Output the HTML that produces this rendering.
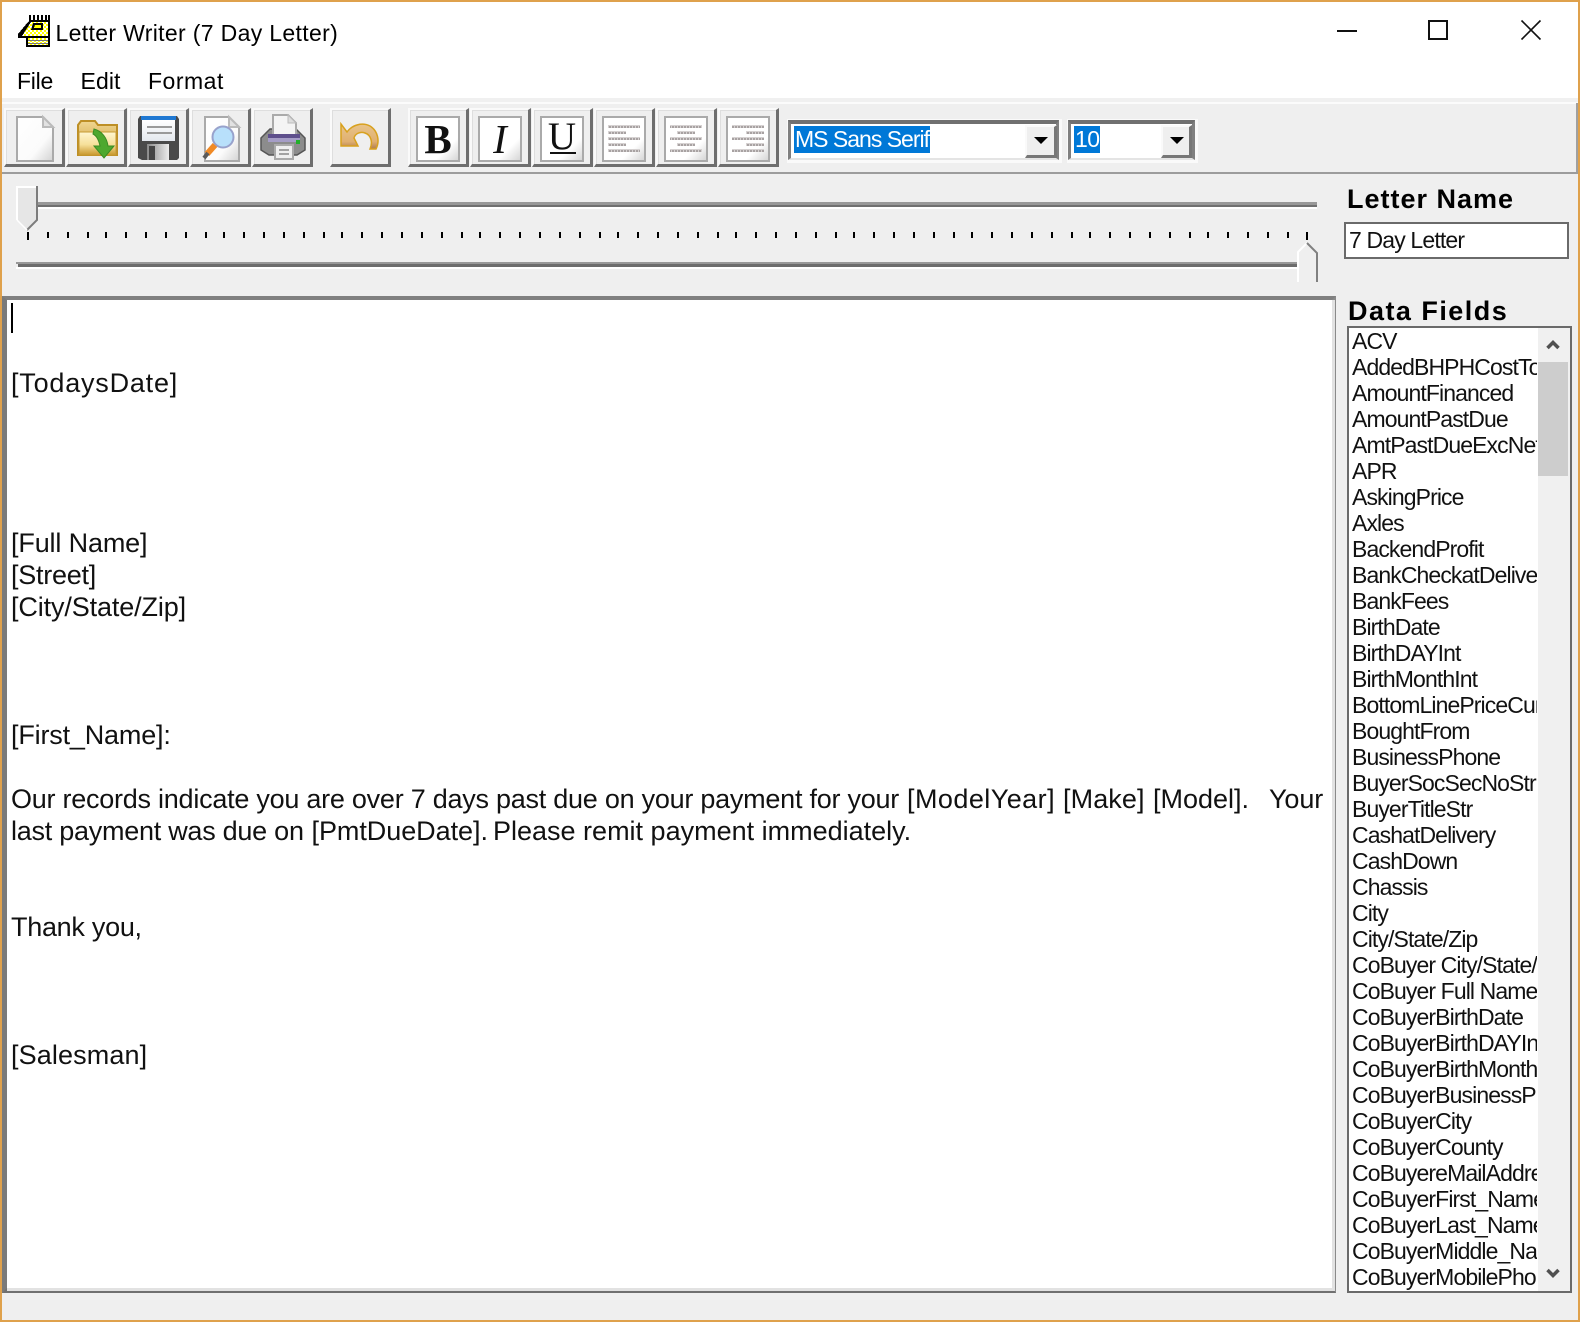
<!DOCTYPE html>
<html lang="en"><head><meta charset="utf-8"><title>Letter Writer</title>
<style>
html,body{margin:0;padding:0;background:#fff}
#w{position:relative;width:1580px;height:1322px;overflow:hidden;background:#efefef;font-family:"Liberation Sans",sans-serif;color:#000}
.a,.t{position:absolute}
.t{white-space:pre;line-height:1}
.btn{position:absolute;top:108px;height:59px;box-sizing:border-box;background:#efefef;border-style:solid;border-width:2px 3px 3px 2px;border-color:#fafafa #6e6e6e #6e6e6e #fafafa;box-shadow:inset 1px 1px 0 #dedede}
.fb{position:absolute;top:116px;width:44px;height:46px;box-sizing:border-box;border:2px solid #aaa;background:linear-gradient(135deg,#fff 0,#fff 72%,#d6d6d6 100%)}
.g{font-family:"Liberation Serif",serif;color:#111;text-align:center;position:absolute;left:0;width:40px;line-height:42px;top:0}
.e{position:absolute;left:11px;white-space:pre;font-size:27px;line-height:32px;height:32px;color:#111}
#list{position:absolute;left:1349px;top:328px;width:188px;height:963px;overflow:hidden;background:#fff}
#list div{height:26px;line-height:26px;font-size:23px;white-space:pre;padding-left:3px;letter-spacing:-.9px;color:#111}
.cb{position:absolute;top:120px;height:40px;box-sizing:border-box;background:#fff;border:solid;border-width:4px 3px 2px 3px;border-color:#707070 #808080 #e4e4e4 #808080;box-shadow:1px 1px 0 2px #fafafa}
.dd{position:absolute;top:125px;height:33px;box-sizing:border-box;background:#efefef;border:solid;border-width:2px 3px 3px 2px;border-color:#fafafa #777 #777 #fafafa}
.ar{position:absolute;top:137px;width:0;height:0;border-left:7px solid transparent;border-right:7px solid transparent;border-top:7px solid #000}
.sel{position:absolute;top:126px;height:27px;background:#0078d7;color:#fff;font-size:23px;line-height:27px;white-space:pre;overflow:hidden}
</style></head><body><div id="w">

<!-- title + menu white area -->
<div class="a" style="left:0;top:0;width:1580px;height:98px;background:#fff"></div>
<div class="a" style="left:0;top:98px;width:1580px;height:4px;background:#f0f0f0"></div>
<div class="a" style="left:0;top:102px;width:1580px;height:2px;background:#fbfbfb"></div>
<div class="a" style="left:1576px;top:103px;width:2px;height:70px;background:#a0a0a0"></div>
<div class="a" style="left:0;top:172px;width:1578px;height:2px;background:#9c9c9c"></div>

<div class="t" style="left:55.500px;top:21px;font-size:23px;line-height:24px;letter-spacing:.34px">Letter Writer (7 Day Letter)</div>
<div class="t" style="left:17px;top:69px;font-size:23px;line-height:24px;letter-spacing:-.25px">File</div>
<div class="t" style="left:80.500px;top:69px;font-size:23px;line-height:24px;letter-spacing:.1px">Edit</div>
<div class="t" style="left:148px;top:69px;font-size:23px;line-height:24px;letter-spacing:.5px">Format</div>

<!-- toolbar buttons -->
<div class="btn" style="left:4px;width:61px"></div>
<div class="btn" style="left:66px;width:61px"></div>
<div class="btn" style="left:128px;width:61px"></div>
<div class="btn" style="left:190px;width:61px"></div>
<div class="btn" style="left:252px;width:61px"></div>
<div class="btn" style="left:330px;width:61px"></div>
<div class="btn" style="left:408px;width:61px"></div>
<div class="btn" style="left:470px;width:61px"></div>
<div class="btn" style="left:532px;width:61px"></div>
<div class="btn" style="left:594px;width:61px"></div>
<div class="btn" style="left:656px;width:61px"></div>
<div class="btn" style="left:718px;width:61px"></div>

<div class="fb" style="left:416px"><span class="g" style="font-size:41px;font-weight:bold">B</span></div>
<div class="fb" style="left:478px"><span class="g" style="font-size:41px;font-style:italic">I</span></div>
<div class="fb" style="left:540px"><span class="g" style="font-size:39px;line-height:38px">U</span><div class="a" style="left:8px;top:34px;width:26px;height:2px;background:#111"></div></div>
<div class="fb" style="left:602px"></div>
<div class="fb" style="left:664px"></div>
<div class="fb" style="left:726px"></div>

<svg class="a" style="left:0;top:0" width="1580" height="300" viewBox="0 0 1580 300">
<defs>
<linearGradient id="pg" x1="0" y1="0" x2="1" y2="1"><stop offset="0" stop-color="#fff"/><stop offset=".65" stop-color="#fbfbfb"/><stop offset="1" stop-color="#d2d2d2"/></linearGradient>
<linearGradient id="fo" x1="0" y1="0" x2="0" y2="1"><stop offset="0" stop-color="#fff6d0"/><stop offset=".55" stop-color="#f6e09a"/><stop offset="1" stop-color="#c9982e"/></linearGradient>
<linearGradient id="fb2" x1="0" y1="0" x2="0" y2="1"><stop offset="0" stop-color="#f0d692"/><stop offset="1" stop-color="#c89a30"/></linearGradient>
<linearGradient id="un" x1="0" y1="0" x2="0" y2="1"><stop offset="0" stop-color="#e9c48a"/><stop offset=".7" stop-color="#e0b070"/><stop offset="1" stop-color="#b07c50"/></linearGradient>
<linearGradient id="fl" x1="0" y1="0" x2="0" y2="1"><stop offset="0" stop-color="#fff"/><stop offset="1" stop-color="#e4e8ee"/></linearGradient>
<linearGradient id="sh" x1="0" y1="0" x2="1" y2="0"><stop offset="0" stop-color="#8a8a8a"/><stop offset="1" stop-color="#ececec"/></linearGradient>
<pattern id="dy" width="4" height="4" patternUnits="userSpaceOnUse"><rect width="4" height="4" fill="#ffff00"/><rect width="2" height="2" fill="#fff"/><rect x="2" y="2" width="2" height="2" fill="#fff"/></pattern>
<pattern id="dl" width="3" height="3" patternUnits="userSpaceOnUse"><rect width="3" height="3" fill="#d6d2d2"/><rect width="2" height="2" fill="#a8a2a2"/></pattern>
</defs>

<!-- app icon -->
<g shape-rendering="crispEdges">
<path d="M30 20H50V47H26V38H18V34L28 22Z" fill="#000"/>
<path d="M31 22H48V36H22Z" fill="url(#dy)"/>
<path d="M28 38H48V45H28Z" fill="url(#dy)"/>
<path d="M33 23H43V30H31Z" fill="#000"/><path d="M35 25H41V28H34Z" fill="#ffff00"/>
<path d="M28 40H48V41H28ZM28 43H48V44H28Z" fill="#777"/>
<path d="M29 15h2v6h-2zM33 15h2v6h-2zM37 15h2v6h-2zM41 15h2v6h-2zM45 15h2v6h-2zM48 15h2v6h-2z" fill="#000"/>
</g>

<!-- new -->
<path d="M17 117H43L53 127V161H17Z" fill="url(#pg)" stroke="#aaa" stroke-width="2"/>
<path d="M43 117V127H53Z" fill="#e2e2e2" stroke="#bbb" stroke-width="2"/>

<!-- open -->
<path d="M78 155V125L81 121H95L98 125H117V155Z" fill="url(#fb2)" stroke="#bd8f26" stroke-width="2"/>
<path d="M79 132H116V155H79Z" fill="url(#fo)" stroke="#c69a33" stroke-width="1"/>
<path d="M94 129C102 131 107 138 108 146H114L104 158L94 146H100C99 141 97 136 93 134Z" fill="#4ea82f" stroke="#3a8c24" stroke-width="1"/>

<!-- save -->
<path d="M140 116H177L179 119V158L177 160H142L138 158V119Z" fill="#4a4a4a"/>
<rect x="141" y="116" width="35" height="4" fill="#1f78d2"/>
<rect x="142" y="120" width="33" height="21" fill="url(#fl)"/>
<rect x="147" y="126" width="25" height="2" fill="#9a9a9a"/>
<rect x="147" y="132" width="25" height="2" fill="#9a9a9a"/>
<rect x="147" y="144" width="22" height="16" fill="url(#sh)"/>
<rect x="149" y="146" width="6" height="14" fill="#444"/>

<!-- preview -->
<path d="M205 117H229L239 127V161H205Z" fill="url(#pg)" stroke="#aaa" stroke-width="2"/>
<path d="M229 117V127H239Z" fill="#e2e2e2" stroke="#bbb" stroke-width="2"/>
<circle cx="223" cy="137" r="10.5" fill="#b8e0fb" stroke="#98a2cc" stroke-width="2"/>
<path d="M215 145L207 154" stroke="#f08a26" stroke-width="6"/>
<path d="M208 153L204 158" stroke="#5a5a5a" stroke-width="4"/>

<!-- print -->
<path d="M261 138L270 129H296L305 138V150L297 155H269L261 150Z" fill="#8c8c8c" stroke="#555" stroke-width="1.500"/>
<path d="M273 115H288L296 123V135H273Z" fill="#f4f4f4" stroke="#aaa" stroke-width="2"/>
<path d="M288 115V123H296Z" fill="#ddd" stroke="#bbb"/>
<rect x="268" y="134" width="32" height="4" fill="#5e4f8c"/>
<rect x="268" y="138" width="32" height="4" fill="#a59dc6"/>
<rect x="296" y="140" width="4" height="4" fill="#22b02a"/>
<rect x="275" y="145" width="18" height="14" fill="#efefef" stroke="#aaa" stroke-width="2"/>
<path d="M279 150H289M279 154H289" stroke="#888" stroke-width="1.500"/>

<!-- undo -->
<path d="M341 124L347 132C352 125 362 122 370 126C378 131 380 141 376 149H370C373 142 371 135 365 133C360 131 355 134 354 138L358 146H341Z" fill="url(#un)" stroke="#d8a11e" stroke-width="1.500"/>

<!-- alignment lines -->
<g fill="url(#dl)" shape-rendering="crispEdges">
<path d="M608 125h32v3h-32zM608 131h18v3h-18zM608 137h32v3h-32zM608 143h18v3h-18zM608 149h32v3h-32z"/>
<path d="M670 125h32v3h-32zM677 131h18v3h-18zM670 137h32v3h-32zM677 143h18v3h-18zM670 149h32v3h-32z"/>
<path d="M732 125h32v3h-32zM746 131h18v3h-18zM732 137h32v3h-32zM746 143h18v3h-18zM732 149h32v3h-32z"/>
</g>

<!-- window controls -->
<g shape-rendering="crispEdges"><rect x="1337" y="30" width="20" height="2" fill="#111"/>
<rect x="1429" y="21" width="18" height="18" fill="none" stroke="#111" stroke-width="2"/></g>
<path d="M1521.500 20.500L1540.500 39.500M1540.500 20.500L1521.500 39.500" stroke="#111" stroke-width="1.600" fill="none"/>

<!-- slider tracks -->
<g shape-rendering="crispEdges">
<rect x="36" y="202" width="1281" height="3" fill="#989898"/><rect x="36" y="205" width="1281" height="2" fill="#707070"/><rect x="36" y="207" width="1281" height="2" fill="#fff"/>
<rect x="16" y="262" width="1281" height="2" fill="#989898"/><rect x="18" y="264" width="1279" height="3" fill="#6c6c6c"/><rect x="16" y="267" width="1281" height="2" fill="#fff"/>
<path fill="#000" d="M27 232h2v8h-2zM47 232h2v6h-2zM67 232h2v6h-2zM87 232h2v6h-2zM105 232h2v6h-2zM125 232h2v6h-2zM145 232h2v6h-2zM165 232h2v6h-2zM185 232h2v6h-2zM205 232h2v6h-2zM223 232h2v6h-2zM243 232h2v6h-2zM263 232h2v6h-2zM283 232h2v6h-2zM303 232h2v6h-2zM323 232h2v6h-2zM341 232h2v6h-2zM361 232h2v6h-2zM381 232h2v6h-2zM401 232h2v6h-2zM421 232h2v6h-2zM441 232h2v6h-2zM461 232h2v6h-2zM479 232h2v6h-2zM499 232h2v6h-2zM519 232h2v6h-2zM539 232h2v6h-2zM559 232h2v6h-2zM579 232h2v6h-2zM599 232h2v6h-2zM617 232h2v6h-2zM637 232h2v6h-2zM657 232h2v6h-2zM677 232h2v6h-2zM697 232h2v6h-2zM717 232h2v6h-2zM735 232h2v6h-2zM755 232h2v6h-2zM775 232h2v6h-2zM795 232h2v6h-2zM815 232h2v6h-2zM835 232h2v6h-2zM853 232h2v6h-2zM873 232h2v6h-2zM893 232h2v6h-2zM913 232h2v6h-2zM933 232h2v6h-2zM953 232h2v6h-2zM971 232h2v6h-2zM991 232h2v6h-2zM1011 232h2v6h-2zM1031 232h2v6h-2zM1051 232h2v6h-2zM1071 232h2v6h-2zM1089 232h2v6h-2zM1109 232h2v6h-2zM1129 232h2v6h-2zM1149 232h2v6h-2zM1169 232h2v6h-2zM1189 232h2v6h-2zM1207 232h2v6h-2zM1227 232h2v6h-2zM1247 232h2v6h-2zM1267 232h2v6h-2zM1287 232h2v6h-2zM1306 232h2v8h-2z"/>
</g>
<!-- thumb 1 -->
<path d="M18 187H37V220L27 230L18 220Z" fill="#e6e6e6"/>
<path d="M17 220V187H36" fill="none" stroke="#fff" stroke-width="2"/>
<path d="M37 186V220L27 230" fill="none" stroke="#7c7c7c" stroke-width="2"/>
<path d="M17 220L27 230" fill="none" stroke="#fff" stroke-width="1.500"/>
<!-- thumb 2 -->
<path d="M1298 252L1307 243L1317 252V282H1298Z" fill="#efefef"/>
<path d="M1298 282V252L1307 243" fill="none" stroke="#fff" stroke-width="2"/>
<path d="M1307 243L1317 253V282" fill="none" stroke="#808080" stroke-width="2"/>
</svg>

<!-- combos -->
<div class="cb" style="left:788px;width:271px"></div>
<div class="sel" style="left:794px;width:136px;padding-left:0"><span style="display:block;letter-spacing:-1px;padding-left:1px">MS Sans Serif</span></div>
<div class="dd" style="left:1025px;width:32px"></div>
<div class="ar" style="left:1034px"></div>
<div class="cb" style="left:1068px;width:127px"></div>
<div class="sel" style="left:1074px;width:26px"><span style="display:block;padding-left:1px;letter-spacing:-.5px">10</span></div>
<div class="dd" style="left:1161px;width:31px"></div>
<div class="ar" style="left:1170px"></div>

<!-- letter name -->
<div class="t" style="left:1347px;top:186px;font-size:27px;font-weight:bold;letter-spacing:1px;line-height:26px">Letter Name</div>
<div class="a" style="left:1344px;top:222px;width:225px;height:37px;box-sizing:border-box;background:#fff;border:2px solid #6a6a6a"></div>
<div class="t" style="left:1349px;top:227px;font-size:23px;line-height:26px;letter-spacing:-.84px;color:#111">7 Day Letter</div>

<!-- editor -->
<div class="a" style="left:2px;top:296px;width:1334px;height:997px;box-sizing:border-box;background:#fff;border:solid;border-width:4px 4px 5px 5px;border-color:#808080 #8a8a8a #707070 #7a7a7a"></div>
<div class="a" style="left:1332px;top:300px;width:3px;height:989px;background:#e2e2e2"></div>
<div class="a" style="left:7px;top:1288px;width:1328px;height:3px;background:#e2e2e2"></div>
<div class="a" style="left:11px;top:303px;width:1.500px;height:30px;background:#000"></div>
<div class="e" style="top:367px;letter-spacing:.79px">[TodaysDate]</div>
<div class="e" style="top:527px;letter-spacing:-.15px">[Full Name]</div>
<div class="e" style="top:559px;letter-spacing:-.26px">[Street]</div>
<div class="e" style="top:591px;letter-spacing:-.13px">[City/State/Zip]</div>
<div class="e" style="top:719px;letter-spacing:-.18px">[First_Name]:</div>
<div class="e" style="top:783px;letter-spacing:-.25px">Our records indicate you are over 7 days past due on your payment for your</div>
<div class="e" style="top:783px;left:907px;letter-spacing:.45px">[ModelYear]</div>
<div class="e" style="top:783px;left:1063px;letter-spacing:.1px">[Make]</div>
<div class="e" style="top:783px;left:1153px;letter-spacing:0">[Model].</div>
<div class="e" style="top:783px;left:1269px;letter-spacing:-.1px">Your</div>
<div class="e" style="top:815px;letter-spacing:-.26px">last payment was due on</div>
<div class="e" style="top:815px;left:311.500px;letter-spacing:-.05px">[PmtDueDate].</div>
<div class="e" style="top:815px;left:493px;letter-spacing:0">Please remit payment immediately.</div>
<div class="e" style="top:911px;letter-spacing:-.28px">Thank you,</div>
<div class="e" style="top:1039px;letter-spacing:.12px">[Salesman]</div>

<!-- data fields -->
<div class="t" style="left:1348px;top:298px;font-size:27px;font-weight:bold;letter-spacing:1.47px;line-height:26px">Data Fields</div>
<div class="a" style="left:1347px;top:326px;width:225px;height:967px;box-sizing:border-box;background:#fff;border:2px solid #6a6a6a"></div>
<div class="a" style="left:1538px;top:328px;width:32px;height:963px;background:#f0f0f0"></div>
<div class="a" style="left:1538px;top:362px;width:30px;height:114px;background:#cdcdcd"></div>
<svg class="a" style="left:1538px;top:328px" width="32" height="963" viewBox="0 0 32 963">
<path d="M9.500 20L15 14.500L20.500 20" fill="none" stroke="#505050" stroke-width="3.500"/>
<path d="M9.500 942L15 947.500L20.500 942" fill="none" stroke="#505050" stroke-width="3.500"/>
</svg>
<div id="list">
<div>ACV</div><div>AddedBHPHCostTo</div><div>AmountFinanced</div><div>AmountPastDue</div><div>AmtPastDueExcNet</div><div>APR</div><div>AskingPrice</div><div>Axles</div><div>BackendProfit</div><div>BankCheckatDelivery</div><div>BankFees</div><div>BirthDate</div><div>BirthDAYInt</div><div>BirthMonthInt</div><div>BottomLinePriceCur</div><div>BoughtFrom</div><div>BusinessPhone</div><div>BuyerSocSecNoStr</div><div>BuyerTitleStr</div><div>CashatDelivery</div><div>CashDown</div><div>Chassis</div><div>City</div><div>City/State/Zip</div><div>CoBuyer City/State/Zip</div><div>CoBuyer Full Name</div><div>CoBuyerBirthDate</div><div>CoBuyerBirthDAYInt</div><div>CoBuyerBirthMonth</div><div>CoBuyerBusinessPhone</div><div>CoBuyerCity</div><div>CoBuyerCounty</div><div>CoBuyereMailAddress</div><div>CoBuyerFirst_Name</div><div>CoBuyerLast_Name</div><div>CoBuyerMiddle_Name</div><div>CoBuyerMobilePhone</div>
</div>

<!-- window border -->
<div class="a" style="left:0;top:0;width:1580px;height:2px;background:#dfa14c"></div>
<div class="a" style="left:0;top:1320px;width:1580px;height:2px;background:#dfa14c"></div>
<div class="a" style="left:0;top:0;width:2px;height:1322px;background:#dfa14c"></div>
<div class="a" style="left:1578px;top:0;width:2px;height:1322px;background:#dfa14c"></div>
</div></body></html>
